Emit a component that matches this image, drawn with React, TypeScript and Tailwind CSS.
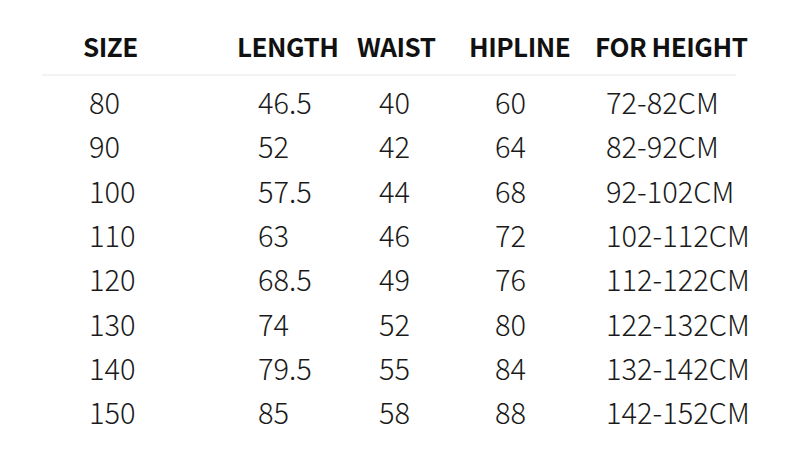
import React from "react";

const rows = [
  ["80", "46.5", "40", "60", "72-82CM"],
  ["90", "52", "42", "64", "82-92CM"],
  ["100", "57.5", "44", "68", "92-102CM"],
  ["110", "63", "46", "72", "102-112CM"],
  ["120", "68.5", "49", "76", "112-122CM"],
  ["130", "74", "52", "80", "122-132CM"],
  ["140", "79.5", "55", "84", "132-142CM"],
  ["150", "85", "58", "88", "142-152CM"],
];

export default function App() {
  return (
    <div
      className="w-[800px] h-[455px] bg-white overflow-hidden"
      style={{ fontFamily: '"Noto Sans CJK SC", "Noto Sans", sans-serif' }}
    >
      <div className="pt-[28px] pl-[83px] grid grid-cols-[154px_120px_112px_126px_1fr] text-[26px] font-bold leading-[36px] text-[#111] tracking-[-0.5px]">
        <div>SIZE</div>
        <div>LENGTH</div>
        <div>WAIST</div>
        <div>HIPLINE</div>
        <div>FOR HEIGHT</div>
      </div>
      <div className="mt-[10px] ml-[42px] w-[694px] h-[2px] bg-[#f3f3f3]" />
      <div className="mt-[3px] pl-[89px]">
        {rows.map((r) => (
          <div
            key={r[0]}
            className="grid grid-cols-[169px_121px_116px_111px_1fr] h-[44.3px] items-center text-[29px] font-light leading-[44px] text-[#1a1a1a]"
          >
            {r.map((c, i) => (
              <div key={i}>{c}</div>
            ))}
          </div>
        ))}
      </div>
    </div>
  );
}
